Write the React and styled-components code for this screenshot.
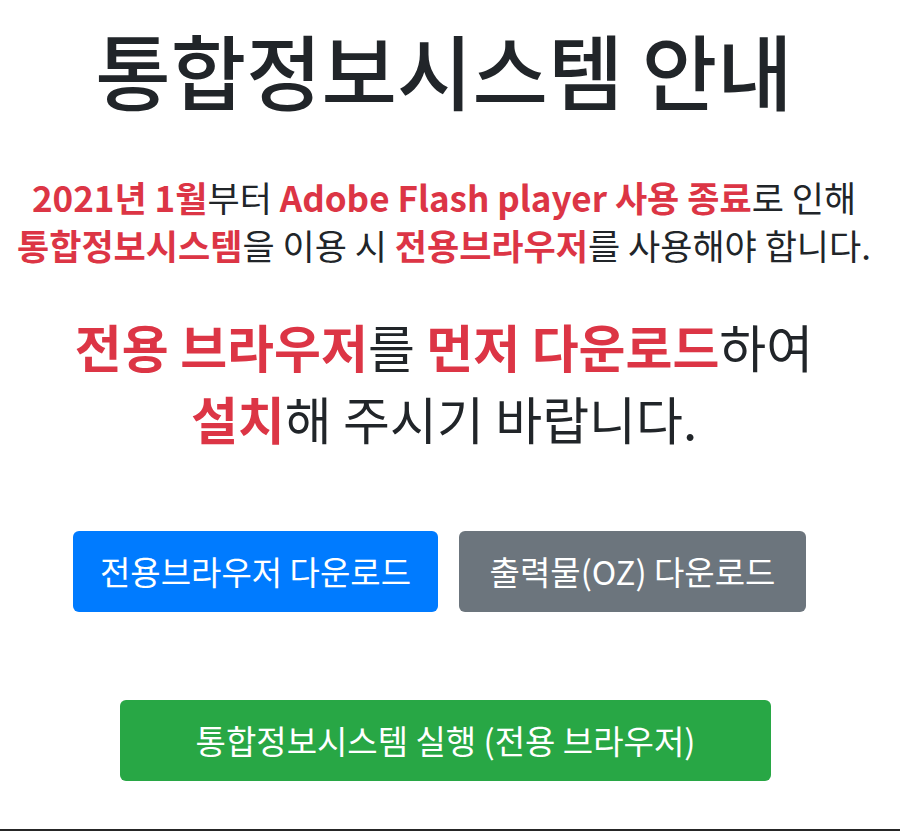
import styled, { createGlobalStyle } from "styled-components";

const GlobalStyle = createGlobalStyle`
    html, body {
        margin: 0;
        padding: 0;
        background: #ffffff;
    }
    body {
        font-family: "Noto Sans CJK KR", "Noto Sans", sans-serif;
        color: #212529;
    }
`;

const Shell = styled.div`
    display: flex;
    flex-direction: column;
    min-height: 100vh;
`;

const Content = styled.main`
    flex: 1;
    display: flex;
    flex-direction: column;
    align-items: center;
    padding: 22px 12px 0 0;
    text-align: center;
`;

const Title = styled.h1`
    margin: 0;
    font-size: 82px;
    line-height: 94px;
    font-weight: 500;
    white-space: nowrap;
`;

const Notice = styled.p`
    margin: 57px 0 0;
    font-size: 35px;
    line-height: 48px;
    white-space: nowrap;
`;

const Request = styled.p`
    margin: 41px 0 0;
    font-size: 51px;
    line-height: 72px;
    white-space: nowrap;
`;

const Em = styled.strong`
    color: #dc3545;
    font-weight: 700;
`;

const ButtonRow = styled.div`
    display: flex;
    gap: 21px;
    margin: 77px 9px 0 0;
`;

const Button = styled.button`
    width: ${props => props.$width}px;
    height: 81px;
    padding: 0;
    border: none;
    border-radius: 6px;
    background: ${props => props.$bg};
    color: #ffffff;
    font-family: inherit;
    font-size: 33px;
    font-weight: 400;
    line-height: 45px;
    white-space: nowrap;

    &:hover {
        cursor: pointer;
    }
`;

const LaunchButton = styled(Button)`
    margin-top: 88px;
    margin-left: 3px;
`;

const BottomRule = styled.div`
    height: 2px;
    background: #262626;
`;

const App = () => {
    return (
        <Shell>
            <GlobalStyle />
            <Content>
                <Title>통합정보시스템 안내</Title>
                <Notice>
                    <Em>2021년 1월</Em>부터 <Em>Adobe Flash player 사용 종료</Em>로 인해
                    <br />
                    <Em>통합정보시스템</Em>을 이용 시 <Em>전용브라우저</Em>를 사용해야 합니다.
                </Notice>
                <Request>
                    <Em>전용 브라우저</Em>를 <Em>먼저 다운로드</Em>하여
                    <br />
                    <Em>설치</Em>해 주시기 바랍니다.
                </Request>
                <ButtonRow>
                    <Button $bg="#007bff" $width={365}>전용브라우저 다운로드</Button>
                    <Button $bg="#6c757d" $width={347}>출력물(OZ) 다운로드</Button>
                </ButtonRow>
                <LaunchButton $bg="#28a745" $width={651}>통합정보시스템 실행 (전용 브라우저)</LaunchButton>
            </Content>
            <BottomRule />
        </Shell>
    );
};

export default App;
